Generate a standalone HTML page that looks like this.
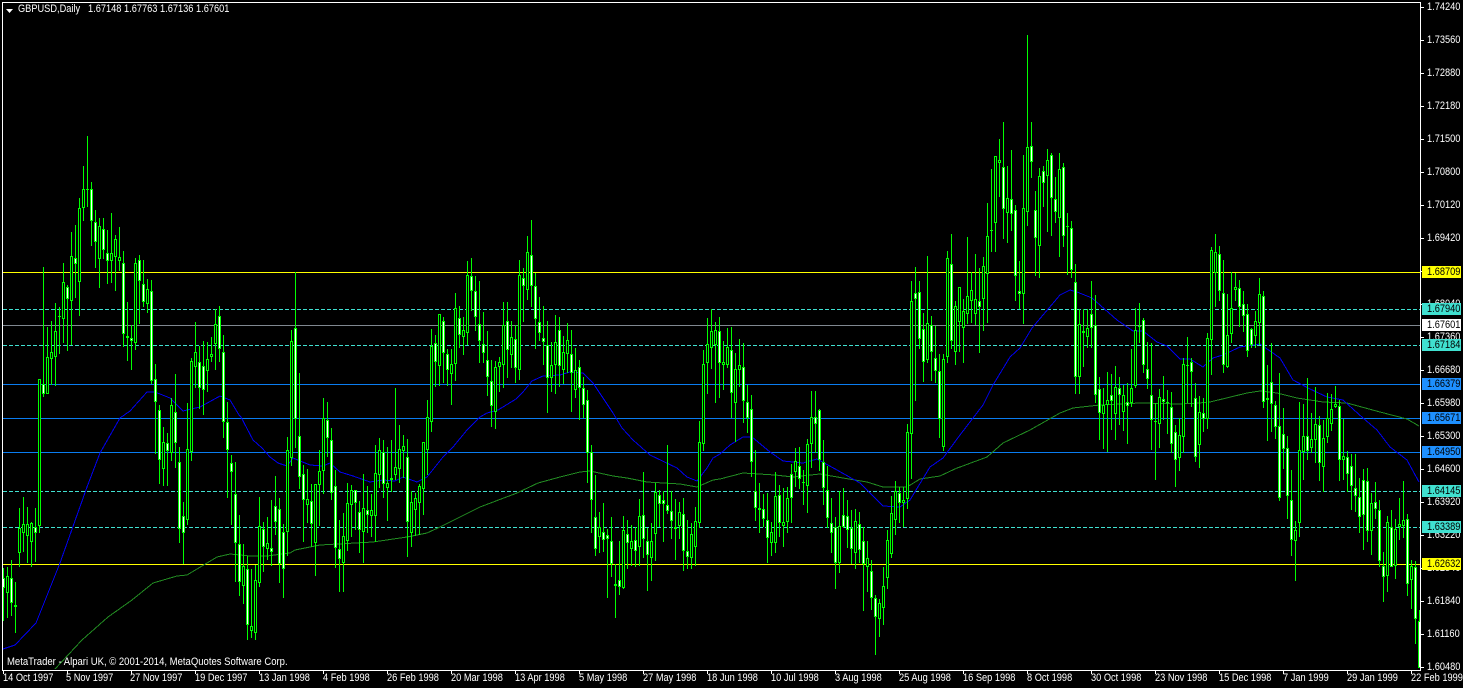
<!DOCTYPE html>
<html><head><meta charset="utf-8"><title>GBPUSD,Daily</title>
<style>
html,body{margin:0;padding:0;background:#000;width:1463px;height:688px;overflow:hidden}
body{position:relative;font-family:"Liberation Sans",sans-serif;font-size:11px;line-height:11px;color:#fff}
svg{position:absolute;left:0;top:0}
.t{position:absolute;white-space:pre;transform:scaleX(.84);transform-origin:0 0}
.p{left:1427px;margin-top:1px}
.b{top:673px}
.g{position:absolute;left:1422px;width:39px;height:12px}
.g span{position:absolute;left:5px;top:1px;color:#000;white-space:pre;transform:scaleX(.84);transform-origin:0 0}
</style></head><body>
<svg id="c" width="1463" height="688" viewBox="0 0 1463 688" shape-rendering="crispEdges">
<rect width="1463" height="688" fill="#000"/>
<g fill="none" stroke-width="1">
<path d="M3 272.5H1420" stroke="#ffff00"/>
<path d="M3 564.5H1420" stroke="#ffff00"/>
<path d="M3 325.5H1420" stroke="#808890"/>
<path d="M3 384.5H1420M3 418.5H1420M3 452.5H1420" stroke="#0a7cf0"/>
<path d="M3 309.5H1420M3 345.5H1420M3 491.5H1420M3 527.5H1420" stroke="#40e0d0" stroke-dasharray="4 2"/>
<polyline stroke="#228b22" points="55,669 82,640 108,617 132,600 153,583 177,576 187,575 217,557 230,554 250,556 267,556 290,553 295,550 320,545 373,542 407,537 427,533 440,527 480,507 517,493 538,483 560,477 580,472 590,471 613,476 627,478 647,482 680,484 697,487 713,480 720,479 743,473 775,475 793,477 820,474 843,478 867,482 883,487 907,487 920,479 940,476 957,468 960,467 987,457 1003,443 1030,430 1060,413 1073,408 1100,405 1140,403 1180,404 1199,403 1210,402 1247,393 1260,391 1277,393 1297,398 1323,402 1347,403 1380,412 1407,419 1419,426"/>
<polyline stroke="#0000f0" points="3,649 15,645 36,623 60,563 87,487 100,453 120,418 130,411 147,392 155,392 170,398 183,411 200,407 220,396 230,400 239,415 241,417 253,440 262,448 270,457 278,463 287,466 293,458 310,465 323,466 330,463 340,472 353,476 370,482 383,480 395,481 403,477 417,482 427,477 443,457 453,447 467,430 478,419 480,417 487,413 498,410 516,399 523,392 532,381 543,376 560,375 570,372 583,373 593,383 613,413 622,428 633,440 650,455 677,468 687,477 697,481 707,468 713,458 720,454 730,445 743,437 752,437 770,452 783,461 803,463 817,459 837,470 860,483 883,506 900,507 910,500 930,467 943,458 960,435 983,405 993,385 1010,357 1020,348 1032,328 1060,295 1070,290 1077,292 1092,298 1117,320 1133,331 1143,331 1157,342 1167,346 1180,359 1190,359 1203,367 1213,358 1223,355 1240,347 1260,344 1280,358 1293,380 1310,389 1327,397 1343,400 1363,418 1377,430 1390,447 1407,460 1419,482"/>
</g>
<path id="wk" fill="none" stroke="#00ff00" stroke-width="1"/>
<path id="bd" fill="#00ff00"/>
<path id="cw" fill="#ffffff"/>
<path id="cb" fill="#000000"/>
<path d="M2.5 2V671M2 2.5H1421M1420.5 2V671M2 670.5H1421" stroke="#fff" fill="none"/>
<path d="M6 9h7l-3.5 4z" fill="#fff" shape-rendering="auto"/>
<path stroke="#fff" fill="none" d="M1421 7.5h3M1421 40.5h3M1421 73.5h3M1421 106.5h3M1421 139.5h3M1421 172.5h3M1421 205.5h3M1421 238.5h3M1421 271.5h3M1421 304.5h3M1421 337.5h3M1421 370.5h3M1421 403.5h3M1421 436.5h3M1421 469.5h3M1421 502.5h3M1421 535.5h3M1421 568.5h3M1421 601.5h3M1421 634.5h3M1421 667.5h3M3.5 671v3M67.5 671v3M131.5 671v3M195.5 671v3M259.5 671v3M323.5 671v3M387.5 671v3M451.5 671v3M515.5 671v3M579.5 671v3M643.5 671v3M707.5 671v3M771.5 671v3M835.5 671v3M899.5 671v3M963.5 671v3M1027.5 671v3M1091.5 671v3M1155.5 671v3M1219.5 671v3M1283.5 671v3M1347.5 671v3M1411.5 671v3"/>
</svg>
<div class="t" style="left:18px;top:4px">GBPUSD,Daily</div>
<div class="t" style="left:88px;top:4px">1.67148</div>
<div class="t" style="left:124px;top:4px">1.67763</div>
<div class="t" style="left:160px;top:4px">1.67136</div>
<div class="t" style="left:196px;top:4px">1.67601</div>
<div class="t" style="left:7px;top:657px;transform:scaleX(.865)">MetaTrader - Alpari UK, © 2001-2014, MetaQuotes Software Corp.</div>

<div class="t p" style="top:1px">1.74240</div>
<div class="t p" style="top:34px">1.73560</div>
<div class="t p" style="top:67px">1.72880</div>
<div class="t p" style="top:100px">1.72180</div>
<div class="t p" style="top:133px">1.71500</div>
<div class="t p" style="top:166px">1.70800</div>
<div class="t p" style="top:199px">1.70120</div>
<div class="t p" style="top:232px">1.69420</div>
<div class="t p" style="top:265px">1.68740</div>
<div class="t p" style="top:298px">1.68040</div>
<div class="t p" style="top:331px">1.67360</div>
<div class="t p" style="top:364px">1.66680</div>
<div class="t p" style="top:397px">1.65980</div>
<div class="t p" style="top:430px">1.65300</div>
<div class="t p" style="top:463px">1.64600</div>
<div class="t p" style="top:496px">1.63920</div>
<div class="t p" style="top:529px">1.63220</div>
<div class="t p" style="top:562px">1.62540</div>
<div class="t p" style="top:595px">1.61840</div>
<div class="t p" style="top:628px">1.61160</div>
<div class="t p" style="top:661px">1.60480</div>

<div class="g" style="top:266px;background:#ffff00"><span>1.68709</span></div>
<div class="g" style="top:303px;background:#40e0d0"><span>1.67940</span></div>
<div class="g" style="top:319px;background:#ffffff"><span>1.67601</span></div>
<div class="g" style="top:339px;background:#40e0d0"><span>1.67184</span></div>
<div class="g" style="top:378px;background:#1e90ff"><span>1.66379</span></div>
<div class="g" style="top:412px;background:#1e90ff"><span>1.65671</span></div>
<div class="g" style="top:446px;background:#1e90ff"><span>1.64950</span></div>
<div class="g" style="top:485px;background:#40e0d0"><span>1.64145</span></div>
<div class="g" style="top:521px;background:#40e0d0"><span>1.63389</span></div>
<div class="g" style="top:558px;background:#ffff00"><span>1.62632</span></div>

<div class="t b" style="left:3px">14 Oct 1997</div>
<div class="t b" style="left:66px">5 Nov 1997</div>
<div class="t b" style="left:130px">27 Nov 1997</div>
<div class="t b" style="left:195px">19 Dec 1997</div>
<div class="t b" style="left:259px">13 Jan 1998</div>
<div class="t b" style="left:323px">4 Feb 1998</div>
<div class="t b" style="left:387px">26 Feb 1998</div>
<div class="t b" style="left:451px">20 Mar 1998</div>
<div class="t b" style="left:515px">13 Apr 1998</div>
<div class="t b" style="left:579px">5 May 1998</div>
<div class="t b" style="left:643px">27 May 1998</div>
<div class="t b" style="left:707px">18 Jun 1998</div>
<div class="t b" style="left:771px">10 Jul 1998</div>
<div class="t b" style="left:835px">3 Aug 1998</div>
<div class="t b" style="left:899px">25 Aug 1998</div>
<div class="t b" style="left:963px">16 Sep 1998</div>
<div class="t b" style="left:1027px">8 Oct 1998</div>
<div class="t b" style="left:1091px">30 Oct 1998</div>
<div class="t b" style="left:1155px">23 Nov 1998</div>
<div class="t b" style="left:1219px">15 Dec 1998</div>
<div class="t b" style="left:1283px">7 Jan 1999</div>
<div class="t b" style="left:1347px">29 Jan 1999</div>
<div class="t b" style="left:1411px">22 Feb 1999</div>

<script>
var S=[
[3,130,"1315 1472 1345 1375w,1312 1465 1337 1388,1290 1458 1345 1420w,1357 1510 1424 1432w,1135 1312 1195 1268,1100 1266 1183 1208,1132 1298 1183 1218,1175 1310 1180 1235,1135 1295 1192 1208w,748 1208 748 1187,412 800 762 793w,592 793 680 793,574 765 667 688,520 768 604 680,532 672 559 560,400 640 457 568,465 662 472 506w,306 645 379 514,286 504 385 401w,204 557 235 457,108 272 178 235,18 232 178 179,156 348 178 272w,240 414 277 337w,265 474 289 388,265 388 298 361w,300 462 370 392w,250 460 370 392,316 484 328 380,292 424 382 394,364 650 400 613w,517 692 619 625,586 720 625 632w,385 660 400 640,376 583 391 454w,390 530 463 517w,448 548 478 523,450 762 484 754w,703 972 748 817w,826 1062 841 991w,892 1068 937 1016,910 1068 940 962w,805 992 826 970,733 1014 847 940w,952 1238 997 1198w,1116 1303 1159 1210w,820 1185 958 1171,685 992 694 967,577 775 667 710,647 838 697 775w,633 856 709 781w,637 787 688 724,620 695 673 682,538 720 583 643,529 695 559 658w,616 924 667 877w,817 1104 877 961w,976 1186 1000 1027w,997 1355 1093 1240w,1155 1397 1243 1355w"],
[243,220,"972 1152 1038 1097,1007 1260 1048 1216w,1048 1254 1219 1232,1035 1260 1081 1238,832 1100 919 1090,907 1055 928 982w,892 1020 970 988,840 1038 985 995w,768 945 859 907w,835 1090 868 1033w,912 1133 937 1048w,652 1007 691 937,330 738 364 715,157 685 325 598w,460 806 649 772w,735 965 763 841w,748 910 838 856,792 980 844 913w,793 1068 793 968,690 917 754 796,535 822 595 754,546 710 601 655w,625 840 661 820w,750 1043 799 985w,900 1115 988 1018w,880 1115 949 1030,790 992 850 964,796 950 811 856,813 930 811 850w,843 998 877 931w,763 1028 865 937,798 940 871 886w,822 950 871 889,675 965 760 889,655 805 691 766,660 835 697 793w,680 902 790 805,660 815 775 779w,505 780 742 766,616 790 688 748,646 775 679 694,658 1010 712 907w,814 980 847 940,820 947 835 871,793 945 799 850,665 885 667 808,540 766 592 691,328 636 379 607,346 500 370 427w,283 497 283 439,290 490 304 400w,388 497 403 451w,388 555 433 463,220 482 265 433,258 384 295 346w,290 405 331 352,124 376 166 340,115 272 169 214w,168 332 214 292w,183 428 311 364w"],
[483,220,"277 428 373 400w,334 527 421 472w,421 620 484 559w,424 626 442 577,412 517 427 442,247 505 316 436,247 473 304 391w,304 445 352 406,316 490 358 445w,121 480 166 451,145 305 175 199w,48 240 97 211,0 260 106 199w,160 388 199 298w,232 364 307 340w,259 435 355 367w,304 578 376 475w,367 517 436 475,286 523 367 436,292 500 331 439w,349 493 397 449,310 460 361 403,331 577 403 460w,385 535 451 511,421 600 442 505w,472 595 505 556w,511 790 541 700w,676 940 697 841w,766 1008 892 988w,877 1000 922 952,850 995 937 961w,928 1133 946 958w,892 1072 964 1033w,1033 1193 1093 1099w,964 1125 1081 1102w,889 1108 931 1105,901 1048 943 970w,916 1037 964 986,922 1040 961 994w,838 1037 889 982,757 1015 886 958w,925 1112 964 1006w,909 1082 964 1015,790 1022 817 943,811 922 826 853w,814 965 841 853w,676 883 856 874w,814 958 874 904w,838 1020 922 926,847 958 877 919,835 1052 883 994w,901 1048 994 1012w,910 1048 943 1015,862 1037 904 982,604 925 667 910,391 692 433 673,295 522 373 430,268 447 334 385,307 550 331 376,292 535 334 430w"],
[723,220,"364 510 427 436,325 445 382 436,320 595 391 520w,400 665 448 550,358 500 436 451,370 610 442 544w,495 640 547 595w,526 770 568 727w,691 902 814 865w,790 940 865 871w,823 920 868 898w,820 1028 901 955w,907 1007 937 970,757 998 829 970,796 950 826 910w,805 980 907 919,802 940 835 907,733 908 763 835w,685 802 724 757,682 808 739 778w,750 855 787 790w,658 878 673 799,514 745 592 673,514 700 592 613w,568 752 571 721w,660 855 727 805w,738 925 811 895w,835 1000 910 940w,892 1106 922 1030w,814 1060 919 1030,805 925 886 922w,840 985 889 931w,871 1033 925 988w,868 1048 904 1000,877 1030 913 991w,922 1172 964 1033w,964 1115 1015 1042,1021 1170 1054 1135w,1125 1304 1135 1192w,1138 1250 1150 1198,1042 1214 1099 1165,931 1108 961 1075,829 1014 880 1003,784 945 814 901,802 910 820 850w,802 922 841 850,613 868 637 838,184 778 244 643,142 543 220 238w,184 388 217 358w,280 487 328 427w,109 430 310 421,289 483 316 397w,319 490 415 454w,403 655 454 598w,403 694 418 682,94 430 115 412,43 388 133 364w,244 435 259 397,202 395 202 305"],
[963,110,"568 758 604 655,382 642 559 613,487 640 541 574,433 646 568 613,475 728 574 592w,441 662 469 566,280 638 379 493,178 425 361 362,139 425 139 338,88 260 150 158,37 386 172 296w,168 400 265 310,121 362 268 313w,285 572 301 499w,454 598 544 553w,136 642 295 553,-225 348 112 307,37 205 109 157w,244 497 301 385w,175 503 199 409,169 290 184 220w,118 366 151 199,130 378 136 265w,202 338 268 307w,130 440 178 325,160 410 172 379w,310 495 347 349,334 505 355 481w,463 852 517 800w,598 852 643 800,598 770 664 670w,598 715 655 682,514 715 613 655w,556 880 646 856w,802 990 838 910w,835 1018 886 913,786 1026 871 886,793 960 856 874w,769 990 832 913,802 945 835 856w,826 962 856 907,820 1002 877 889w,718 890 835 880,595 835 661 829,580 700 647 649,625 790 631 766w,697 838 778 808w,700 1020 856 931w,880 1110 934 935,838 1015 862 943,799 930 868 877w,840 972 877 878,847 1030 892 1003w,946 1130 967 1051w,925 1082 976 1045,745 1030 763 982,682 880 765 767,745 890 757 787w,820 1056 865 1042w,858 1075 907 1005"],
[1203,230,"505 605 550 568w,310 597 325 568,52 435 61 331,13 232 67 130,48 213 73 184w,91 428 190 406w,193 415 316 412,125 340 235 313,130 212 172 181,151 292 175 232w,184 305 223 259w,223 382 253 364w,295 355 298 346w,244 355 274 319,145 345 193 280,184 533 199 517w,405 632 505 511,340 605 457 523w,514 627 526 592w,430 813 589 805w,535 716 613 658w,619 866 655 799w,721 977 811 931w,874 1052 901 934,517 920 661 880,523 750 619 667,445 690 619 664w,550 670 628 655,472 700 583 631,559 753 586 700w,570 785 625 712,490 640 565 622,492 602 538 583,469 535 523 532,511 754 529 691w,568 750 679 691,664 785 682 733w,673 840 709 769w,673 847 775 799w,745 908 802 862w,718 960 751 856w,715 935 754 904w,790 975 820 904,757 868 817 838w,811 1010 841 994w,965 1115 1009 1042w,858 1085 877 1039,841 1012 892 1012w,868 1048 898 1009,805 930 883 892,754 925 871 889,853 1098 868 1063w,991 1138 1009 1051,994 1243 1012 1168w,1140 1314 1174 1314w"]
];
var W="",B="",CW="",CB="";
S.forEach(function(s){
  var x=s[0],y0=s[1];
  s[2].split(",").forEach(function(c){
    var a=c.split(" "),f=function(i){return Math.round(y0+parseFloat(a[i])/3)};
    var wt=f(0),wb=f(1),bt=f(2),bb=f(3),w=c.charAt(c.length-1)=="w";
    W+="M"+(x+.5)+" "+wt+"V"+wb;
    var h=Math.max(bb-bt,1);
    B+="M"+(x-1)+" "+bt+"h3v"+h+"h-3z";
    if(h>2){ var p="M"+x+" "+(bt+1)+"h1v"+(h-2)+"h-1z"; if(w)CW+=p; else CB+=p; }
    x+=4;
  });
});
document.getElementById("wk").setAttribute("d",W);
document.getElementById("bd").setAttribute("d",B);
document.getElementById("cw").setAttribute("d",CW);
document.getElementById("cb").setAttribute("d",CB);
</script>
</body></html>
